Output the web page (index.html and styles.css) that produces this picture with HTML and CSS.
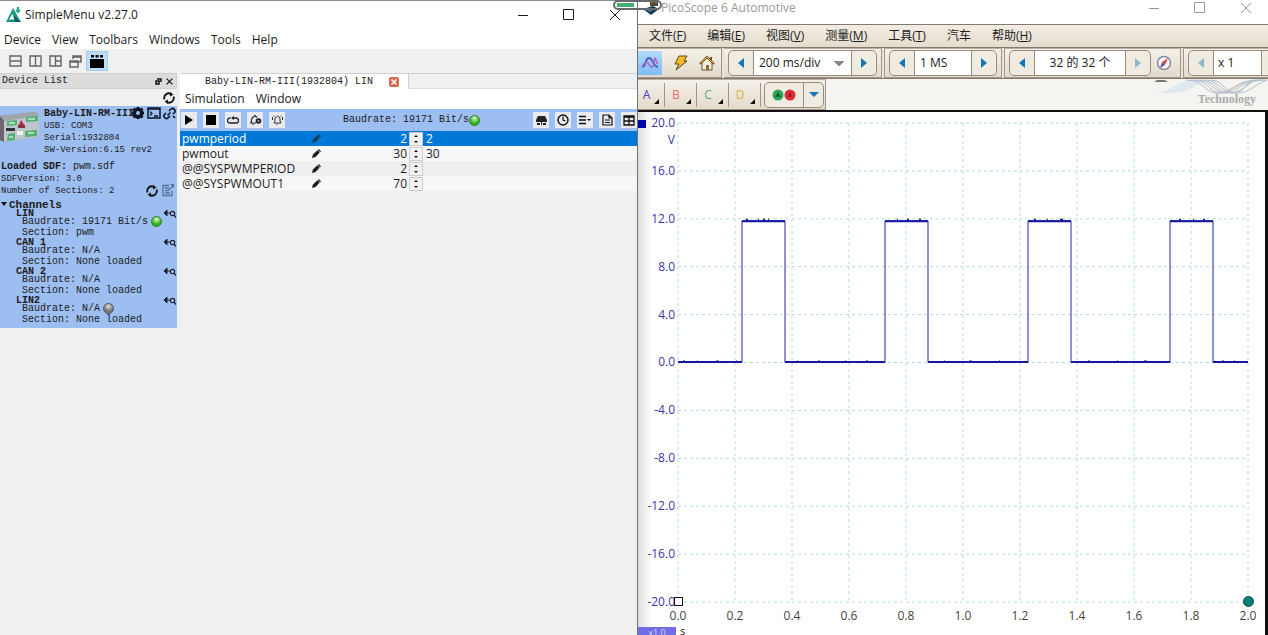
FILE: index.html
```html
<!DOCTYPE html>
<html lang="zh-CN">
<head>
  <meta charset="UTF-8" />
  <meta name="viewport" content="width=device-width, initial-scale=1.0"/>
  <title>SimpleMenu v2.27.0</title>
  <link rel="stylesheet" href="styles.css">
</head>
<body>
  <!-- shared icons -->
  <svg class="defs" width="0" height="0">
    <symbol id="refresh" viewBox="0 0 12 12"><path d="M1.500 7.500A4.600 4.600 0 0 1 8 1.900M10.500 4.500A4.600 4.600 0 0 1 4 10.100" fill="none" stroke="#111" stroke-width="1.800"/><path d="M7 0l3.500 2.500L7 4.500zM5 12L1.500 9.500 5 7.500z" fill="#111"/></symbol>
    <symbol id="find" viewBox="0 0 12 8"><path d="M0 3h6M3 0L0 3l3 3z" fill="#223" stroke="#223"/><circle cx="8.500" cy="3.500" r="2.200" fill="none" stroke="#223" stroke-width="1.200"/><path d="M10 5l2 2.500" stroke="#223" stroke-width="1.400"/></symbol>
    <symbol id="pencil" viewBox="0 0 10 10"><path d="M0 10l1-4 5-4.500 2.500 2.500L4 9zM6.500 1l1-1L10 2.500l-1 1z" fill="currentColor"/></symbol>
    <symbol id="prev" viewBox="0 0 6 10"><path d="M6 0v10L0 5z" fill="currentColor"/></symbol>
    <symbol id="next" viewBox="0 0 6 10"><path d="M0 0v10l6-5z" fill="currentColor"/></symbol>
    <symbol id="min" viewBox="0 0 12 12"><path d="M1 6.500h10" stroke="currentColor"/></symbol>
    <symbol id="max" viewBox="0 0 12 12"><path d="M.500 .500h10v10h-10z" fill="none" stroke="currentColor"/></symbol>
    <symbol id="close" viewBox="0 0 12 12"><path d="M1 1l10 10M11 1L1 11" stroke="currentColor"/></symbol>
  </svg>

  <main class="desktop">
    <section class="simple">
      <header class="titlebar">
        <svg class="app-icon" width="16" height="16" viewBox="0 0 16 16"><path d="M7 1l8 14H0z" fill="#159a80"/><path d="M6.500 7l3 5.500H3z" fill="#fff"/><path d="M7 8l8 7H9z" fill="#0b5f63"/><path d="M12 0v4M10 3l2 2 2-2" stroke="#28ad78" stroke-width="2" fill="none"/></svg>
        <h1>SimpleMenu v2.27.0</h1>
        <div class="win-buttons">
          <button aria-label="Minimize"><svg width="12" height="12"><use href="#min"/></svg></button>
          <button aria-label="Maximize"><svg width="12" height="12"><use href="#max"/></svg></button>
          <button aria-label="Close"><svg width="12" height="12"><use href="#close"/></svg></button>
        </div>
      </header>
      <nav class="menu">
        <a href="#">Device</a><a href="#">View</a><a href="#">Toolbars</a><a href="#">Windows</a><a href="#">Tools</a><a href="#">Help</a>
      </nav>
      <div class="toolbar">
        <button aria-label="Rows"><svg width="13" height="12" viewBox="0 0 13 12"><path d="M1 1h11v10H1zM1 6h11" fill="none" stroke="#666" stroke-width="1.400"/></svg></button>
        <button aria-label="Columns"><svg width="13" height="12" viewBox="0 0 13 12"><path d="M1 1h11v10H1zM6.500 1v10" fill="none" stroke="#666" stroke-width="1.400"/></svg></button>
        <button aria-label="Grid"><svg width="13" height="12" viewBox="0 0 13 12"><path d="M1 1h11v10H1zM6.500 1v10M6.500 6H12" fill="none" stroke="#666" stroke-width="1.400"/></svg></button>
        <button aria-label="Cascade"><svg width="13" height="13" viewBox="0 0 13 13"><path d="M4 4V1h8v6H9M1 6h8v6H1zM1 7h8M4 2h8" fill="none" stroke="#666" stroke-width="1.500"/></svg></button>
        <button class="on" aria-label="Tabs"><svg width="14" height="14" viewBox="0 0 14 14"><path d="M0 5h14v9H0zM1 1h3v2.500H1zM5.500 1h3v2.500h-3zM10 1h3v2.500h-3z" fill="#000"/></svg></button>
      </div>

      <div class="workspace">
        <aside class="dock">
          <div class="dock-head">
            <h2>Device List</h2>
            <button aria-label="Float"><svg width="7" height="7" viewBox="0 0 7 7"><path d="M2 1h4v3M1 3h3v3H1z" fill="none" stroke="#111" stroke-width="1.500"/></svg></button>
            <button aria-label="Close list"><svg width="7" height="7" viewBox="0 0 12 12"><path d="M1 1l10 10M11 1L1 11" stroke="#111" stroke-width="2"/></svg></button>
          </div>
          <div class="dock-refresh"><button aria-label="Refresh list"><svg width="12" height="12"><use href="#refresh"/></svg></button></div>
          <div class="device">
            <div class="device-top">
              <svg class="photo" width="42" height="32" viewBox="0 0 42 32"><path d="M0 5l35-4 4 4v21L4 31l-4-3z" fill="#858b92"/><path d="M0 5l35-4 4 4L4 10z" fill="#a0a5aa"/><path d="M4 10l35-5v21L4 31z" fill="#bcc6cb"/><path d="M0 5l4 5v21l-4-2z" fill="#6f6475"/><path d="M7 10l10-1v5l-10 1zM26 6l12-1v5l-12 1zM8 23l7-1v7l-8 1zM25 20l12-1v6l-12 1z" fill="#55ad78"/><path d="M9 12h6M28 8h7M9 26h4M28 22h6" stroke="#a5e0ac" stroke-width="2"/><path d="M6 17h9v3H6z" fill="#333"/><path d="M21 9l4 6-7 1z" fill="#c02447"/><path d="M18 14h7v3h-7z" fill="#823041"/><path d="M17 20h6v4h-6z" fill="#eef3f2"/></svg>
              <div class="device-info">
                <strong>Baby-LIN-RM-III</strong>
                <p>USB: COM3</p>
                <p>Serial:1932804</p>
                <p>SW-Version:6.15 rev2</p>
              </div>
              <div class="device-actions">
                <button aria-label="Settings"><svg width="14" height="14" viewBox="0 0 14 14"><circle cx="7" cy="7" r="3.600" fill="none" stroke="#0c1426" stroke-width="3.200"/><path d="M7 1v2M7 11v2M1 7h2M11 7h2M2.500 2.500L4 4M10 10l1.500 1.500M11.500 2.500L10 4M4 10l-1.500 1.500" stroke="#0c1426" stroke-width="3"/></svg></button>
                <button aria-label="Console"><svg width="14" height="12" viewBox="0 0 14 12"><path d="M1 1h12v10H1z" fill="none" stroke="#0c1426" stroke-width="1.500"/><path d="M1 2h12M3 4.500l2 2-2 2M7 9h4" fill="none" stroke="#0c1426" stroke-width="1.300"/></svg></button>
                <button aria-label="Disconnect"><svg width="13" height="13" viewBox="0 0 13 13"><path d="M6 4l2-2a2.500 2.500 0 0 1 3.500 3.500L10 7M7 9l-2 2a2.500 2.500 0 0 1-3.500-3.500L3 6M4.500 8.500l3-3M10 9l2 2" fill="none" stroke="#0c1426" stroke-width="1.600"/></svg></button>
              </div>
            </div>
            <div class="sdf">
              <p class="sdf-name"><strong>Loaded SDF:</strong> pwm.sdf</p>
              <p>SDFVersion: 3.0</p>
              <p>Number of Sections: 2</p>
              <div class="sdf-actions">
                <button aria-label="Reload SDF"><svg width="12" height="12"><use href="#refresh"/></svg></button>
                <button aria-label="Edit SDF"><svg width="12" height="13" viewBox="0 0 12 13"><path d="M7 1.500H1v10h9V7M3 4h4M3 6.500h4M3 9h5M7 6l4-4" fill="none" stroke="#53739f" stroke-width="1.300"/><path d="M8 0h4v4z" fill="#53739f"/></svg></button>
              </div>
            </div>
            <h3>Channels</h3>
            <ul class="channels">
              <li><strong>LIN</strong><p>Baudrate: 19171 Bit/s<i class="led green"></i></p><p>Section: pwm</p><svg width="12" height="8"><use href="#find"/></svg></li>
              <li><strong>CAN 1</strong><p>Baudrate: N/A</p><p>Section: None loaded</p><svg width="12" height="8"><use href="#find"/></svg></li>
              <li><strong>CAN 2</strong><p>Baudrate: N/A</p><p>Section: None loaded</p><svg width="12" height="8"><use href="#find"/></svg></li>
              <li><strong>LIN2</strong><p>Baudrate: N/A<i class="led"></i></p><p>Section: None loaded</p><svg width="12" height="8"><use href="#find"/></svg></li>
            </ul>
          </div>
        </aside>

        <div class="editor">
          <div class="tabs">
            <div class="tab"><span>Baby-LIN-RM-III(1932804) LIN</span><button aria-label="Close tab"><svg width="6" height="6" viewBox="0 0 12 12"><path d="M1 1l10 10M11 1L1 11" stroke="#fff" stroke-width="3"/></svg></button></div>
          </div>
          <nav class="menu sub"><a href="#">Simulation</a><a href="#">Window</a></nav>
          <div class="sim-bar">
            <button aria-label="Start"><svg width="10" height="12" viewBox="0 0 10 12"><path d="M1 1l8 5-8 5z"/></svg></button>
            <button aria-label="Stop"><svg width="10" height="10" viewBox="0 0 10 10"><path d="M0 0h10v10H0z"/></svg></button>
            <button aria-label="Loop"><svg width="12" height="10" viewBox="0 0 12 10"><path d="M3.500 3H3a2.200 2.200 0 0 0 0 5h6a2.200 2.200 0 0 0 0-5H6" fill="none" stroke="#222" stroke-width="1.300"/><path d="M7 1v4L4 3z" fill="#222"/></svg></button>
            <button aria-label="Wakeup"><svg width="13" height="12" viewBox="0 0 13 12"><path d="M1 9h6M2 9l1-5 3-2.500 2 2M4 10v1" fill="none" stroke="#222" stroke-width="1.200"/><circle cx="9.500" cy="7" r="2.800" fill="#222"/><circle cx="9.500" cy="7" r="1" fill="#aaa"/></svg></button>
            <button aria-label="Sleep"><svg width="13" height="12" viewBox="0 0 13 12"><path d="M3 9h7L9 7V4L6.500 2 4 4v3zM6 10v1M1.500 3v3M11.500 3v3M3 1.500v1M10 1.500v1" fill="none" stroke="#333"/></svg></button>
            <p class="baud">Baudrate: 19171 Bit/s<i class="led green"></i></p>
            <div class="sim-right">
              <button aria-label="Bus"><svg width="13" height="12" viewBox="0 0 13 12"><path d="M1 6l2-4h7l2 4v2H1zM2 9h3v2H2zM8 9h3v2H8zM6 8h1v3H6z" fill="#222"/></svg></button>
              <button aria-label="Schedule"><svg width="12" height="12" viewBox="0 0 12 12"><circle cx="6" cy="6" r="5" fill="none" stroke="#111" stroke-width="1.400"/><path d="M6 2.500V6l2.500 1" fill="none" stroke="#111" stroke-width="1.200"/></svg></button>
              <button aria-label="List"><svg width="12" height="10" viewBox="0 0 12 10"><path d="M0 1.500h7M0 5h7M0 8.500h7" stroke="#111" stroke-width="1.600"/><path d="M8 4h4l-2 2z"/></svg></button>
              <button aria-label="Report"><svg width="11" height="12" viewBox="0 0 11 12"><path d="M1 1h6l3 3v7H1zM7 1v3h3M3 6h5M3 8.500h5" fill="none" stroke="#111" stroke-width="1.200"/></svg></button>
              <button aria-label="Table"><svg width="12" height="11" viewBox="0 0 12 11"><path d="M1 1h10v9H1zM1 2h10M1 6h10M6 1v9" fill="none" stroke="#111" stroke-width="1.300"/></svg></button>
            </div>
          </div>
          <table class="signals">
            <colgroup><col class="c-name"><col class="c-edit"><col class="c-value"><col class="c-spin"><col></colgroup>
            <tr class="selected"><td>pwmperiod</td><td><svg width="9" height="9"><use href="#pencil"/></svg></td><td><input type="text" value="2" aria-label="pwmperiod"></td><td><button class="spin" aria-label="Step pwmperiod"></button></td><td>2</td></tr>
            <tr><td>pwmout</td><td><svg width="9" height="9"><use href="#pencil"/></svg></td><td><input type="text" value="30" aria-label="pwmout"></td><td><button class="spin" aria-label="Step pwmout"></button></td><td>30</td></tr>
            <tr><td>@@SYSPWMPERIOD</td><td><svg width="9" height="9"><use href="#pencil"/></svg></td><td><input type="text" value="2" aria-label="@@SYSPWMPERIOD"></td><td><button class="spin" aria-label="Step @@SYSPWMPERIOD"></button></td><td></td></tr>
            <tr><td>@@SYSPWMOUT1</td><td><svg width="9" height="9"><use href="#pencil"/></svg></td><td><input type="text" value="70" aria-label="@@SYSPWMOUT1"></td><td><button class="spin" aria-label="Step @@SYSPWMOUT1"></button></td><td></td></tr>
          </table>
        </div>
      </div>
    </section>

    <section class="pico">
      <div class="pill"><span></span></div>
      <header class="pico-title">
        <svg width="18" height="16" viewBox="0 0 18 16"><path d="M1 9l10-3 6 3-8 6z" fill="#18374e"/><path d="M4 10l6-2 4 1-6 3z" fill="#3a78ad"/><path d="M8 0h8v6H8z" fill="#574932"/><path d="M9 1h2v2H9z" fill="#d24836"/><path d="M13 1h2v2h-2z" fill="#5a9b3d"/></svg>
        <h1>PicoScope 6 Automotive</h1>
        <div class="win-buttons">
          <button aria-label="Minimize"><svg width="12" height="12"><use href="#min"/></svg></button>
          <button aria-label="Maximize"><svg width="12" height="12"><use href="#max"/></svg></button>
          <button aria-label="Close"><svg width="12" height="12"><use href="#close"/></svg></button>
        </div>
      </header>
      <nav class="pico-menu">
        <a href="#">文件(<u>F</u>)</a><a href="#">编辑(<u>E</u>)</a><a href="#">视图(<u>V</u>)</a><a href="#">测量(<u>M</u>)</a><a href="#">工具(<u>T</u>)</a><a href="#">汽车</a><a href="#">帮助(<u>H</u>)</a>
      </nav>

      <div class="pico-bar">
        <div class="bar modes">
          <button class="on" aria-label="Scope"><svg width="18" height="16" viewBox="0 0 18 16"><path d="M1 12C5 12 4 3 8 3s4 9 9 9" fill="none" stroke="#5558c8" stroke-width="2"/><path d="M1 12c2-4 4-6 6-4s3 6 5 3 1-8 2-8 1 5 3 6" fill="none" stroke="#a866bd" stroke-width="1.500"/></svg></button>
          <button aria-label="Auto setup"><svg width="14" height="16" viewBox="0 0 14 16"><path d="M5 1h8l-3 5h3L2 15l3-6H1z" fill="#f3bd25" stroke="#5a4717"/></svg></button>
          <button aria-label="Home"><svg width="16" height="16" viewBox="0 0 16 16"><path d="M3 8v7h10V8L8 3z" fill="#f4efdb" stroke="#67583a"/><path d="M1 9l7-7 7 7M12 2v4" fill="none" stroke="#75511c" stroke-width="2"/><path d="M2 8l6-6 6 6" fill="none" stroke="#e2b545"/><path d="M7 10h3v5H7z" fill="#8b6c35"/></svg></button>
        </div>
        <div class="bar">
          <div class="stepper">
            <button aria-label="Faster"><svg width="6" height="10"><use href="#prev"/></svg></button>
            <select class="timebase" aria-label="Timebase"><option>200 ms/div</option></select>
            <button aria-label="Slower"><svg width="6" height="10"><use href="#next"/></svg></button>
          </div>
        </div>
        <div class="bar">
          <div class="stepper">
            <button aria-label="Fewer samples"><svg width="6" height="10"><use href="#prev"/></svg></button>
            <input class="samples" type="text" value="1 MS" aria-label="Samples">
            <button aria-label="More samples"><svg width="6" height="10"><use href="#next"/></svg></button>
          </div>
        </div>
        <div class="bar">
          <div class="stepper">
            <button aria-label="Previous buffer"><svg width="6" height="10"><use href="#prev"/></svg></button>
            <input class="buffer" type="text" value="32 的 32 个" aria-label="Buffer">
            <button aria-label="Next buffer" disabled><svg width="6" height="10"><use href="#next"/></svg></button>
          </div>
          <button class="compass" aria-label="Buffer navigator"><svg width="16" height="16" viewBox="0 0 16 16"><circle cx="8" cy="8" r="6.500" fill="#fff" stroke="#858a9c" stroke-width="1.500"/><path d="M12 3L6 7l3 3z" fill="#df3d4e"/><path d="M4 13l2-6 3 3z" fill="#6a4a9b"/></svg></button>
        </div>
        <div class="bar last">
          <div class="stepper">
            <button aria-label="Zoom out" disabled><svg width="6" height="10"><use href="#prev"/></svg></button>
            <input class="zoom" type="text" value="x 1" aria-label="Zoom">
            <button aria-label="Zoom in"></button>
          </div>
        </div>
      </div>

      <div class="channel-bar">
        <div class="bar chans">
          <button class="a">A</button><button class="b">B</button><button class="c">C</button><button class="d">D</button>
          <div class="stepper">
            <button class="leads" aria-label="Leads"><svg width="24" height="12" viewBox="0 0 24 12"><circle cx="6" cy="6" r="5.500" fill="#2da65a"/><circle cx="18" cy="6" r="5.500" fill="#dc2b39"/><path d="M6 3l3 5H3z" fill="#146433"/><path d="M18 3l2 5h-4z" fill="#8c1521"/></svg></button>
            <button class="leads-menu" aria-label="Leads menu"><svg width="10" height="6" viewBox="0 0 10 6"><path d="M0 0h10L5 5z" fill="#1476b4"/></svg></button>
          </div>
        </div>
        <div class="brand">
          <svg width="115" height="15" viewBox="0 0 115 15"><path d="M4 1h8l3 2H1z" fill="#777"/><path d="M0 14C18 14 22 2 40 1h13C42 4 40 14 20 14z" fill="#dfe9ef"/><g fill="none" stroke="#b4bdcb"><path d="M33 1c18 0 18 13 32 13s16-13 42-13"/><path d="M38 1c18 0 18 13 30 13s16-13 42-13"/><path d="M43 1c16 0 18 13 29 13s17-13 42-13"/><path d="M48 1c14 0 16 13 28 13S94 5 103 1"/><path d="M53 1c12 0 16 13 27 13S94 4 99 1"/><path d="M58 1c12 0 13 13 26 13s18-9 30-13"/></g></svg>
          <span>Technology</span>
        </div>
      </div>

      <div class="scope">
        <div class="y-axis">
          <b class="handle"></b><em>V</em>
          <span>20.0</span><span>16.0</span><span>12.0</span><span>8.0</span><span>4.0</span><span>0.0</span><span>-4.0</span><span>-8.0</span><span>-12.0</span><span>-16.0</span><span>-20.0</span>
        </div>
        <div class="plot">
          <svg viewBox="0 0 570 480" preserveAspectRatio="none">
            <path class="grid" d="M0 0H570M0 48H570M0 96H570M0 144H570M0 192H570M0 240H570M0 288H570M0 336H570M0 384H570M0 432H570M0 480H570M0 0V480M57 0V480M114 0V480M171 0V480M228 0V480M285 0V480M342 0V480M399 0V480M456 0V480M513 0V480M570 0V480"/>
            <path class="wave" d="M0 240H64V98H107V240H207V98H250V240H350V98H393V240H492V98H535V240H570"/>
            <path class="noise" d="M0 239.500H64M64 98.500H107M107 239.500H207M207 98.500H250M250 239.500H350M350 98.500H393M393 239.500H492M492 98.500H535M535 239.500H570"/>
            <path class="noise" d="M5 239h2M19 239h1M38 239h3M58 239h1M68 97h2M80 97h1M85 97h2M90 97h1M119 239h1M140 239h2M167 239h1M188 239h2M219 97h1M229 97h2M241 97h2M266 239h1M291 239h3M321 239h1M356 97h2M369 97h1M382 97h3M410 239h2M439 239h1M466 239h3M501 97h2M515 97h1M525 97h2M544 239h2M556 239h1"/>
          </svg>
          <b class="origin"></b><b class="knob"></b>
        </div>
        <div class="x-axis">
          <span>0.0</span><span>0.2</span><span>0.4</span><span>0.6</span><span>0.8</span><span>1.0</span><span>1.2</span><span>1.4</span><span>1.6</span><span>1.8</span><span>2.0</span>
        </div>
        <div class="scale"><span>x1.0</span><em>s</em></div>
      </div>
    </section>
  </main>
</body>
</html>
```

FILE: styles.css
```css
* {
  box-sizing: border-box;
}

body {
  margin: 0;
  font: 12px/16px "Open Sans", "Noto Sans CJK SC", sans-serif;
  color: #1c1c1c;
  background: #f0f0f0;
  overflow: hidden;
}

h1, h2, h3, p, ul {
  margin: 0;
  padding: 0;
  font-size: inherit;
  font-weight: normal;
}

a {
  color: inherit;
  text-decoration: none;
}

button {
  display: flex;
  align-items: center;
  justify-content: center;
  padding: 0;
  border: 0;
  background: none;
  font: inherit;
  color: inherit;
}

input, select {
  margin: 0;
  padding: 0;
  border: 0;
  border-radius: 0;
  font: inherit;
  color: inherit;
  background: #fff;
}

svg {
  display: block;
  flex: none;
}

.defs {
  position: absolute;
}

.desktop {
  display: grid;
  grid-template-columns: 637fr 631fr;
  height: 100vh;
}

/* ---- SimpleMenu ---- */
.simple {
  display: flex;
  flex-direction: column;
  min-width: 0;
  border-top: 1px solid #8d8a8d;
  background: #f0f0f0;
}

.titlebar {
  display: flex;
  align-items: center;
  height: 29px;
  padding: 0 16px 2px 6px;
  gap: 3px;
  background: #fff;
}

.win-buttons {
  display: flex;
  gap: 34px;
  margin-left: auto;
}

.menu {
  display: flex;
  gap: 11px;
  height: 19px;
  line-height: 19px;
  padding-left: 4px;
  background: #fff;
}

.toolbar {
  display: flex;
  align-items: center;
  height: 24px;
  padding-left: 5px;
}

.toolbar button {
  width: 20px;
  height: 20px;
}

.toolbar .on {
  width: 22px;
  margin-left: 1px;
  background: #bfdcf5;
  border: 1px solid #a0cdf2;
}

.workspace {
  display: flex;
  flex: 1;
  gap: 3px;
  min-height: 0;
}

.dock {
  width: 177px;
  flex: none;
  font: 10px/12px "Liberation Mono", monospace;
}

.dock-head {
  display: flex;
  align-items: center;
  gap: 4px;
  height: 16px;
  padding: 0 3px 0 2px;
  background: #dcdcdc;
  border: 1px solid #cfcfcf;
  border-left: 0;
}

.dock-head h2 {
  margin-right: auto;
}

.dock-refresh {
  display: flex;
  justify-content: flex-end;
  align-items: center;
  height: 17px;
  padding-right: 2px;
}

.device {
  height: 222px;
  background: #9dbef1;
}

.device-top {
  position: relative;
  display: flex;
  height: 55px;
  padding-top: 2px;
  gap: 2px;
}

.photo {
  margin-top: 3px;
}

.device-info {
  font-size: 9px;
}

.device-info strong {
  display: block;
  font-size: 10px;
}

.device-actions {
  position: absolute;
  top: 0;
  right: 1px;
  display: flex;
  align-items: center;
  gap: 2px;
  height: 14px;
}

.sdf {
  position: relative;
  padding-left: 1px;
  font-size: 9px;
}

.sdf strong, .sdf-name {
  font-size: 10px;
}

.sdf-actions {
  position: absolute;
  right: 3px;
  bottom: 0;
  display: flex;
  gap: 4px;
}

.device h3 {
  display: flex;
  align-items: center;
  height: 13px;
  padding-top: 2px;
  font-size: 11px;
  font-weight: bold;
}

.device h3::before {
  content: "";
  margin: 0 2px 2px 1px;
  border: 3px solid transparent;
  border-top: 4px solid #111;
  border-bottom: 0;
}

.channels {
  list-style: none;
}

.channels li {
  position: relative;
  height: 29px;
  padding-left: 22px;
  line-height: 11px;
}

.channels strong {
  display: block;
  height: 6px;
  margin-left: -6px;
  line-height: 8px;
}

.channels p {
  display: flex;
  align-items: center;
  height: 11px;
}

.channels svg {
  position: absolute;
  top: 0;
  right: 1px;
}

.led {
  width: 11px;
  height: 11px;
  margin-left: 3px;
  flex: none;
  border: 1px solid #555;
  border-radius: 50%;
  background: radial-gradient(circle at 50% 25%, #ddd, #777 60%);
}

.led.green {
  border-color: #2b7d20;
  background: radial-gradient(circle at 50% 25%, #d9ffc9, #2fb51b 60%);
}

.editor {
  flex: 1;
  min-width: 0;
}

.tabs {
  height: 16px;
  border-top: 1px solid #d0d0d0;
  border-bottom: 1px solid #e0e0e0;
  font: 10px/15px "Liberation Mono", monospace;
}

.tab {
  display: flex;
  align-items: center;
  justify-content: space-between;
  width: 229px;
  height: 15px;
  padding: 0 9px 0 25px;
  background: #fff;
  border-right: 1px solid #d0d0d0;
}

.tab button {
  width: 10px;
  height: 10px;
  border-radius: 2px;
  background: #d9694e;
}

.menu.sub {
  height: 20px;
  line-height: 20px;
  padding-left: 5px;
}

.sim-bar {
  display: flex;
  align-items: center;
  gap: 6px;
  height: 22px;
  padding-left: 1px;
  background: #9dbef1;
}

.sim-bar button {
  width: 16px;
  height: 16px;
  background: #e8eaee;
}

.baud {
  display: flex;
  align-items: center;
  margin-left: 52px;
  font: 10px/12px "Liberation Mono", monospace;
}

.baud .led {
  margin-left: 0;
}

.sim-right {
  display: flex;
  gap: 6px;
  margin-left: auto;
}

.signals {
  width: 100%;
  table-layout: fixed;
  border-collapse: collapse;
}

.c-name {
  width: 130px;
}

.c-edit {
  width: 14px;
}

.c-value {
  width: 83px;
}

.c-spin {
  width: 17px;
}

.signals td {
  height: 15px;
  padding: 0 2px;
  line-height: 15px;
  white-space: nowrap;
}

.signals tr {
  background: #f7f7f7;
}

.signals tr:nth-child(odd) {
  background: #efefef;
}

.signals tr.selected {
  background: #0078d7;
  color: #fff;
}

.selected svg {
  color: #163a5c;
}

.signals input {
  display: block;
  width: 100%;
  height: 15px;
  text-align: right;
  background: transparent;
}

.signals td:nth-child(3) {
  padding: 0;
}

.spin {
  position: relative;
  width: 14px;
  height: 14px;
  border: 1px solid #ccc;
  background: #f0f0f0;
}

.spin::before, .spin::after {
  content: "";
  position: absolute;
  left: 4px;
  border: 2px solid transparent;
}

.spin::before {
  top: 2px;
  border-top: 0;
  border-bottom-color: #111;
}

.spin::after {
  bottom: 2px;
  border-bottom: 0;
  border-top-color: #111;
}

/* ---- PicoScope ---- */
.pico {
  position: relative;
  display: flex;
  flex-direction: column;
  min-width: 0;
  border-left: 1px solid #6f7276;
  background: #f5f4f0;
}

.pill {
  position: absolute;
  top: 0;
  left: -25px;
  width: 49px;
  height: 10px;
  padding: 1px 2px;
  border: 2px solid #656b6d;
  border-radius: 5px;
}

.pill span {
  display: block;
  width: 17px;
  height: 4px;
  background: #44ad74;
}

.pico-title {
  display: flex;
  height: 24px;
  padding: 0 16px 8px 4px;
  gap: 1px;
  background: #fff;
  color: #999;
}

.pico-title .win-buttons {
  align-items: center;
}

.pico-menu {
  display: flex;
  gap: 21px;
  height: 24px;
  padding-left: 11px;
  line-height: 22px;
  white-space: nowrap;
  border-top: 1px solid #85796f;
  border-bottom: 1px solid #85796f;
  background: linear-gradient(#f3eee4, #e3dccd);
}

.pico-bar {
  display: flex;
  gap: 2px;
  height: 31px;
  overflow: hidden;
  border-bottom: 1px solid #85796f;
  background: #e9e3d8;
}

.bar {
  display: flex;
  align-items: center;
  flex: none;
  padding: 0 4px;
  border: 1px solid #a1958a;
  border-top-color: #b9aea2;
  background: linear-gradient(#f5f1e9, #e2dacb);
}

.pico-bar .bar:nth-child(2) {
  border-left: 0;
}

.modes {
  width: 84px;
  padding: 0;
  border-left: 0;
}

.modes button {
  width: 26px;
  height: 24px;
}

.modes .on {
  width: 24px;
  margin-right: 6px;
  background: linear-gradient(#b5dafb, #7dbdf3);
}

.stepper {
  display: flex;
  height: 26px;
  overflow: hidden;
  border: 1px solid #988b80;
  border-radius: 5px;
  background: #f0ebe1;
}

.stepper button {
  width: 24px;
  color: #1476b4;
}

.stepper button:disabled {
  color: #8eb6ca;
}

.timebase {
  width: 99px;
  padding: 0 5px;
  appearance: none;
  border: solid #988b80;
  border-width: 0 1px;
  background: linear-gradient(#888, #888) 80px 10px / 10px 1px no-repeat, linear-gradient(#888, #888) 81px 11px / 8px 1px no-repeat, linear-gradient(#888, #888) 82px 12px / 6px 1px no-repeat, linear-gradient(#888, #888) 83px 13px / 4px 1px no-repeat, linear-gradient(#888, #888) 84px 14px / 2px 1px no-repeat, #fff;
}

.stepper input {
  padding: 0 5px;
  border: solid #988b80;
  border-width: 0 1px;
}

.stepper .samples {
  width: 58px;
}

.stepper .buffer {
  width: 92px;
  text-align: center;
}

.stepper .zoom {
  width: 49px;
  padding: 0 4px;
}

.compass {
  width: 25px;
  height: 24px;
}

.channel-bar {
  display: flex;
  justify-content: space-between;
  height: 31px;
}

.chans {
  padding: 0 1px 0 0;
  border-left: 0;
}

.chans > button {
  position: relative;
  width: 32px;
  height: 24px;
  padding-right: 9px;
  border-right: 1px solid #a1958a;
}

.chans > .a {
  width: 27px;
}

.chans > button::after {
  content: "";
  position: absolute;
  right: 5px;
  bottom: 3px;
  height: 0;
  border-left: 5px solid transparent;
  border-bottom: 5px solid #111;
}

.a { color: #4b38bd; }
.b { color: #e66a74; }
.c { color: #53ab73; }
.d { color: #d9b453; }

.chans .stepper {
  margin-left: 3px;
}

.stepper .leads {
  width: 39px;
  border-right: 1px solid #988b80;
}

.stepper .leads-menu {
  width: 19px;
}

.brand {
  display: flex;
  flex-direction: column;
  align-items: flex-end;
  font: bold 12px/10px "Liberation Serif", serif;
  color: #aaa;
}

.brand span {
  margin-right: 12px;
}

.scope {
  display: grid;
  grid-template-columns: 40px 1fr;
  grid-template-rows: 1fr 25px 8px;
  flex: 1;
  min-height: 0;
  padding: 11px 17px 0 0;
  border-top: 2px solid #111;
  border-right: 3px solid #111;
  background: linear-gradient(90deg, #ddd, #fff 14px);
}

.y-axis {
  position: relative;
  display: flex;
  flex-direction: column;
  justify-content: space-between;
  margin: -8px 0;
  padding-right: 3px;
  text-align: right;
  color: #3b35a5;
}

.y-axis em {
  position: absolute;
  top: 17px;
  right: 3px;
  font-style: normal;
}

.handle {
  position: absolute;
  top: 5px;
  left: 0;
  width: 8px;
  height: 8px;
  background: #0505a5;
}

.plot {
  position: relative;
  min-height: 0;
}

.plot svg {
  position: absolute;
  width: 100%;
  height: 100%;
  overflow: visible;
}

.plot path {
  fill: none;
  vector-effect: non-scaling-stroke;
}

.grid {
  stroke: #b2dcdf;
  stroke-dasharray: 3 3;
}

.wave {
  stroke: #2525b5;
}

.noise {
  stroke: #1717a0;
  stroke-width: 2px;
}

.origin, .knob {
  position: absolute;
  bottom: -4px;
  left: -4px;
  width: 9px;
  height: 9px;
  border: 1px solid #111;
  background: #fff;
}

.knob {
  bottom: -5px;
  left: auto;
  right: -6px;
  width: 11px;
  height: 11px;
  border-color: #0a4b48;
  border-radius: 50%;
  background: #078078;
}

.x-axis {
  grid-column: 2;
  display: flex;
  justify-content: space-between;
  margin: 6px -12px 0;
  color: #444;
}

.x-axis span {
  width: 24px;
  text-align: center;
}

.scale {
  grid-column: 1 / 3;
  display: flex;
  gap: 4px;
  overflow: hidden;
  font-size: 9px;
  line-height: 12px;
}

.scale span {
  width: 38px;
  text-align: center;
  color: #d5d4ff;
  background: #706de5;
}

.scale em {
  font-style: normal;
  font-size: 11px;
  line-height: 8px;
}
```
